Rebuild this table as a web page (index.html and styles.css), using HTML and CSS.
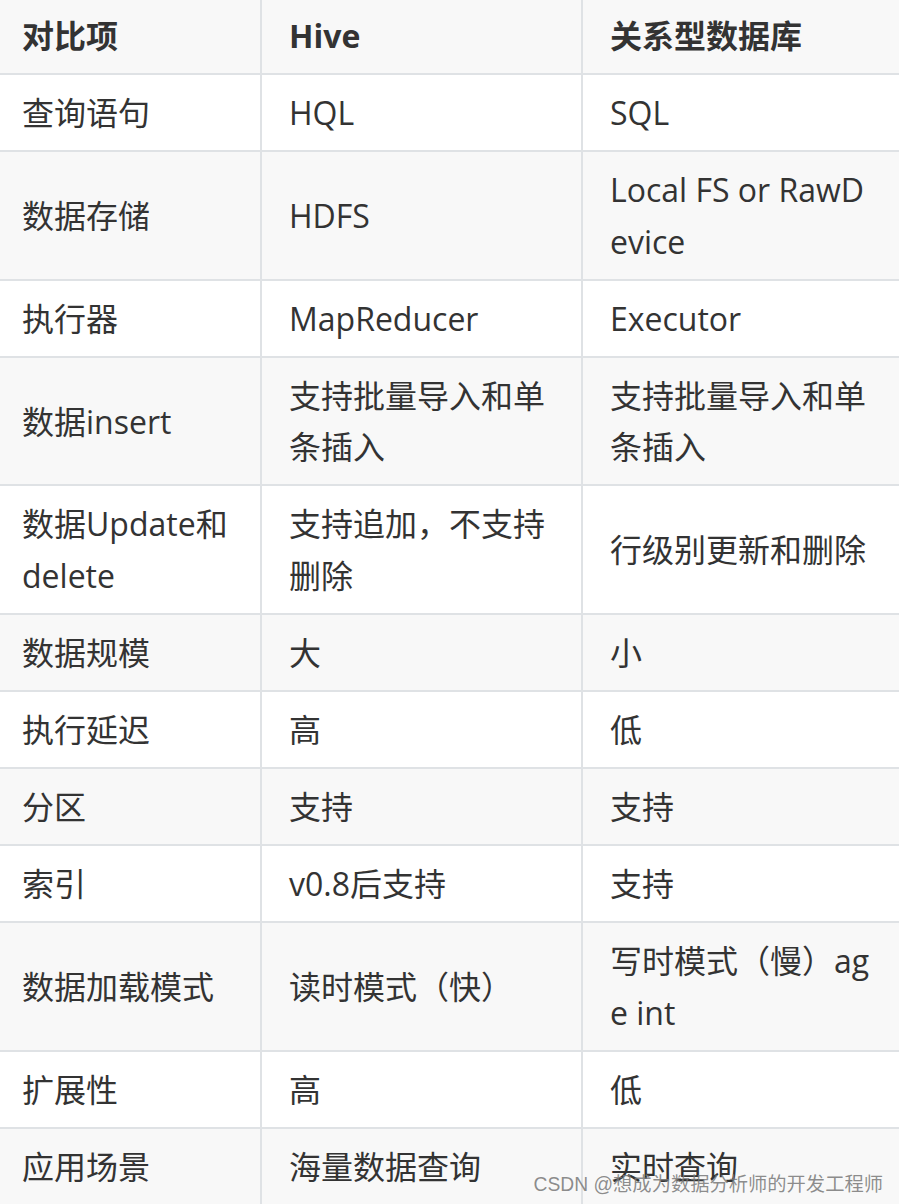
FILE: index.html
```html
<!DOCTYPE html>
<html lang="zh-CN">
<head>
<meta charset="utf-8">
<title>Hive 与关系型数据库对比</title>
<link rel="stylesheet" href="styles.css">
</head>
<body>
<div class="page">
  <table class="cmp">
    <colgroup>
      <col class="c1"><col class="c2"><col class="c3">
    </colgroup>
    <thead>
      <tr><th>对比项</th><th>Hive</th><th>关系型数据库</th></tr>
    </thead>
    <tbody>
      <tr><td>查询语句</td><td>HQL</td><td>SQL</td></tr>
      <tr><td>数据存储</td><td>HDFS</td><td>Local FS or RawDevice</td></tr>
      <tr><td>执行器</td><td>MapReducer</td><td>Executor</td></tr>
      <tr><td>数据insert</td><td>支持批量导入和单条插入</td><td>支持批量导入和单条插入</td></tr>
      <tr><td>数据Update和delete</td><td>支持追加，不支持删除</td><td>行级别更新和删除</td></tr>
      <tr><td>数据规模</td><td>大</td><td>小</td></tr>
      <tr><td>执行延迟</td><td>高</td><td>低</td></tr>
      <tr><td>分区</td><td>支持</td><td>支持</td></tr>
      <tr><td>索引</td><td>v0.8后支持</td><td>支持</td></tr>
      <tr><td>数据加载模式</td><td>读时模式（快）</td><td>写时模式（慢）age int</td></tr>
      <tr><td>扩展性</td><td>高</td><td>低</td></tr>
      <tr><td>应用场景</td><td>海量数据查询</td><td>实时查询</td></tr>
    </tbody>
  </table>
  <div class="watermark">CSDN @想成为数据分析师的开发工程师</div>
</div>
</body>
</html>
```

FILE: styles.css
```css
html, body {
  margin: 0;
  padding: 0;
  background: #ffffff;
}
.page {
  position: relative;
  width: 899px;
  height: 1204px;
  overflow: hidden;
}
.cmp {
  border-collapse: separate;
  border-spacing: 0;
  table-layout: fixed;
  width: 899px;
  font-family: "Open Sans", "Noto Sans CJK SC", sans-serif;
  font-size: 32px;
  line-height: 1.6;
  color: #333333;
}
.c1 { width: 262px; }
.c2 { width: 321px; }
.c3 { width: 316px; }
.cmp th, .cmp td {
  box-sizing: border-box;
  text-align: left;
  vertical-align: middle;
  padding: 12px 27px;
  border-right: 2px solid #dfe2e5;
  border-bottom: 2px solid #dfe2e5;
  word-break: break-all;
}
.cmp th:first-child, .cmp td:first-child {
  padding-left: 22px;
}
.cmp th:last-child, .cmp td:last-child {
  border-right: none;
  padding-right: 20px;
}
.cmp th {
  font-weight: 700;
  padding-top: 10px;
}
.cmp thead tr { background: #f8f8f8; }
.cmp tbody tr { background: #ffffff; }
.cmp tbody tr:nth-child(even) { background: #f8f8f8; }
.watermark {
  position: absolute;
  right: 16px;
  bottom: 7px;
  font-family: "Liberation Sans", "Noto Sans CJK SC", sans-serif;
  font-size: 19.3px;
  color: rgba(120, 120, 120, 0.85);
  white-space: nowrap;
}
```
